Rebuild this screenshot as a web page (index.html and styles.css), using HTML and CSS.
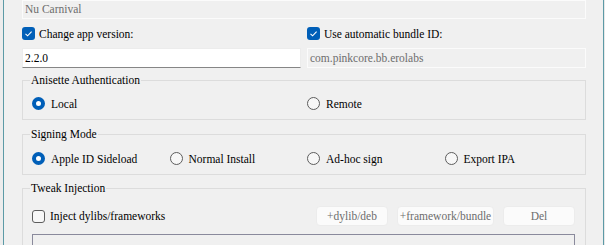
FILE: index.html
```html
<!DOCTYPE html>
<html lang="en">
<head>
    <meta charset="UTF-8">
    <meta name="viewport" content="width=device-width, initial-scale=1.0">
    <title>Sideload options</title>
    <link rel="stylesheet" href="styles.css">
</head>
<body>
    <div class="screen">
        <div class="behind"></div>
        <div class="window">
            <div class="field disabled top-field">Nu Carnival</div>

            <div class="pair">
                <label class="check-row">
                    <span class="box checked">
                        <svg viewBox="0 0 13 13" width="13" height="13"><polyline points="3.5,6.8 5.6,8.8 9.6,4.6" fill="none" stroke="#fff" stroke-width="1.1"/></svg>
                    </span>
                    Change app version:
                </label>
                <label class="check-row">
                    <span class="box checked">
                        <svg viewBox="0 0 13 13" width="13" height="13"><polyline points="3.5,6.8 5.6,8.8 9.6,4.6" fill="none" stroke="#fff" stroke-width="1.1"/></svg>
                    </span>
                    Use automatic bundle ID:
                </label>
                <div class="field">2.2.0</div>
                <div class="field disabled">com.pinkcore.bb.erolabs</div>
            </div>

            <fieldset class="group group-auth">
                <legend>Anisette Authentication</legend>
                <div class="radios">
                    <label class="radio-row"><span class="dot selected"></span>Local</label>
                    <label class="radio-row col-3"><span class="dot"></span>Remote</label>
                </div>
            </fieldset>

            <fieldset class="group group-sign">
                <legend>Signing Mode</legend>
                <div class="radios">
                    <label class="radio-row"><span class="dot selected"></span>Apple ID Sideload</label>
                    <label class="radio-row"><span class="dot"></span>Normal Install</label>
                    <label class="radio-row"><span class="dot"></span>Ad-hoc sign</label>
                    <label class="radio-row"><span class="dot"></span>Export IPA</label>
                </div>
            </fieldset>

            <fieldset class="group group-tweak">
                <legend>Tweak Injection</legend>
                <div class="tweak-row">
                    <label class="check-row inject"><span class="box"></span>Inject dylibs/frameworks</label>
                    <div class="buttons">
                        <button class="btn w-small" disabled>+dylib/deb</button>
                        <button class="btn w-large" disabled>+framework/bundle</button>
                        <button class="btn w-small" disabled>Del</button>
                    </div>
                </div>
                <div class="listbox"></div>
            </fieldset>
        </div>
        <div class="edge-right"></div>
    </div>
</body>
</html>
```

FILE: styles.css
```css
html, body {
    margin: 0;
    height: 100%;
    overflow: hidden;
}
body {
    font-family: "Liberation Serif", "DejaVu Serif", serif;
    font-size: 11.5px;
    color: #000;
    background: #f0f0f0;
}
.screen {
    display: flex;
    height: 100%;
}
.behind {
    flex: none;
    width: 3px;
    background: #ececec;
    border-right: 1px solid #5c9aa6;
}
.edge-right {
    flex: none;
    width: 1px;
    background: #5c9aa6;
    border-right: 1px solid #e8e8e8;
}
.window {
    flex: 1;
    min-width: 0;
    padding: 0 17px 0 18px;
    background: #f0f0f0;
}
.field {
    box-sizing: border-box;
    height: 20px;
    padding: 0 2px;
    line-height: 18px;
    background: #fff;
    border: 1px solid #ececec;
    border-bottom-color: #868686;
    white-space: nowrap;
    overflow: hidden;
}
.field.disabled {
    background: #f0f0f0;
    border-color: #fbfbfb;
    color: #6d6d6d;
}
.top-field {
    height: 19px;
    line-height: 17px;
}
.pair {
    display: grid;
    grid-template-columns: 1fr 1fr;
    column-gap: 6px;
    row-gap: 8px;
    margin-top: 8px;
}
.check-row {
    display: flex;
    align-items: center;
    gap: 4px;
    height: 13px;
    white-space: nowrap;
}
.box {
    box-sizing: border-box;
    width: 13px;
    height: 13px;
    border-radius: 3px;
    border: 1px solid #5d5d5d;
    background: #f7f7f7;
    flex: none;
}
.box.checked {
    border: none;
    background: #005fb8;
}
.box svg {
    display: block;
}
.group {
    margin: 5px 0 0;
    padding: 9px 10px 9px 9px;
    border: 1px solid #dcdcdc;
    min-width: 0;
}
.group legend {
    padding: 0 1px;
    margin-left: -2px;
    line-height: 15px;
}
.group-sign {
    margin-top: 7px;
    padding-top: 10px;
}
.group-tweak {
    margin-top: 6px;
    padding-top: 10px;
    padding-bottom: 0;
    border-bottom: none;
}
.radios {
    display: grid;
    grid-template-columns: repeat(4, 137.5px);
}
.radio-row {
    display: flex;
    align-items: center;
    gap: 6px;
    height: 13px;
    white-space: nowrap;
}
.col-3 {
    grid-column: 3;
}
.dot {
    box-sizing: border-box;
    width: 13px;
    height: 13px;
    border-radius: 50%;
    border: 1px solid #5d5d5d;
    background: #f7f7f7;
    flex: none;
}
.dot.selected {
    border: 4px solid #005fb8;
    background: #fff;
}
.tweak-row {
    display: flex;
    align-items: center;
    height: 20px;
}
.inject {
    gap: 5px;
}
.buttons {
    margin-left: auto;
    display: flex;
    gap: 9px;
}
.btn {
    box-sizing: border-box;
    height: 20px;
    padding: 0;
    font-family: inherit;
    font-size: inherit;
    color: #6d6d6d;
    background: #fbfbfb;
    border: 1px solid #ececec;
    border-radius: 4px;
}
.w-small {
    width: 72px;
}
.w-large {
    width: 97px;
}
.listbox {
    margin-top: 8px;
    height: 40px;
    border: 1px solid #8a8a9c;
    background: #f0f0f0;
}
```
